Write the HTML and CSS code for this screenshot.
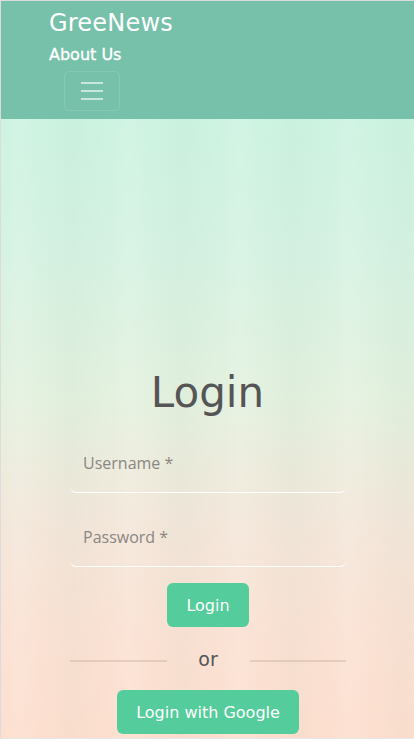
FILE: index.html
```html
<!DOCTYPE html>
<html lang="en">
<head>
<meta charset="utf-8">
<title>GreeNews - Login</title>
<link rel="stylesheet" href="styles.css">
</head>
<body>
<nav class="navbar">
  <a class="brand" href="#">GreeNews</a>
  <a class="nav-link" href="#">About Us</a>
  <button class="toggler" type="button" aria-label="Toggle navigation">
    <svg width="30" height="30" viewBox="0 0 30 30"><path d="M4 7h22M4 15h22M4 23h22" stroke="rgba(255,255,255,0.6)" stroke-width="2" stroke-linecap="butt"/></svg>
  </button>
</nav>
<main class="page">
  <div class="streaks"></div>
  <section class="login">
    <h1 class="title">Login</h1>
    <form class="form">
      <input class="field" type="text" placeholder="Username *">
      <input class="field" type="password" placeholder="Password *">
      <button class="btn" type="button">Login</button>
      <div class="divider"><span class="line"></span><span class="or">or</span><span class="line"></span></div>
      <button class="btn" type="button">Login with Google</button>
    </form>
  </section>
</main>
</body>
</html>
```
FILE: styles.css
```css
html, body { margin: 0; padding: 0; }
body {
  font-family: "DejaVu Sans", "Open Sans", sans-serif;
  border-top: 1px solid #dcdcdc;
  border-left: 1px solid #dcdcdc;
  border-bottom: 1px solid #e8e8e8;
  height: 737px;
  overflow: hidden;
  box-sizing: content-box;
}
.navbar {
  background: #77c1ab;
  height: 118px;
  padding: 6px 0 0 48px;
  box-sizing: border-box;
  display: flex;
  flex-direction: column;
  align-items: flex-start;
}
.brand {
  color: #fff;
  text-decoration: none;
  font-size: 24px;
  line-height: 32px;
  letter-spacing: 0.2px;
}
.nav-link {
  color: #fff;
  text-decoration: none;
  font-size: 16px;
  line-height: 20px;
  margin-top: 6px;
  -webkit-text-stroke: 0.3px #fff;
}
.toggler {
  margin: 6px 0 0 15px;
  width: 56px;
  height: 40px;
  background: transparent;
  border: 1px solid rgba(255,255,255,0.12);
  border-radius: 5px;
  padding: 0;
  display: flex;
  align-items: center;
  justify-content: center;
}
.toggler svg { display: block; }
.page {
  position: relative;
  height: 620px;
  background: linear-gradient(180deg, #cdf3e1 0%, #d6f2e2 22%, #e4f1df 45%, #f3e7da 65%, #fae2d4 82%, #fddfcf 100%);
  overflow: hidden;
}
.streaks {
  position: absolute;
  inset: 0;
  background: repeating-linear-gradient(90deg, rgba(255,255,255,0) 0px, rgba(255,255,255,0.1) 18px, rgba(0,0,0,0.0) 40px, rgba(120,160,140,0.04) 70px, rgba(255,255,255,0) 110px);
  pointer-events: none;
}
.login {
  position: relative;
  padding-top: 249px;
  display: flex;
  flex-direction: column;
  align-items: center;
}
.title {
  margin: 0;
  font-family: "DejaVu Sans", sans-serif;
  font-weight: normal;
  font-size: 42px;
  line-height: 50px;
  color: #555;
}
.form {
  width: 276px;
  display: flex;
  flex-direction: column;
  align-items: center;
  margin-top: 15px;
  margin-left: 1px;
}
.field {
  width: 100%;
  box-sizing: border-box;
  height: 60px;
  background: transparent;
  border: none;
  border-bottom: 1px solid #fff;
  border-radius: 6px;
  padding: 0 13px;
  font-family: "Open Sans", sans-serif;
  font-size: 16px;
  color: #555;
  outline: none;
}
.field::placeholder { color: #8a8683; }
.field + .field { margin-top: 14px; }
.btn {
  margin-top: 16px;
  background: #55cc9b;
  color: #fff;
  border: none;
  border-radius: 6px;
  height: 44px;
  padding: 0 19px;
  font-family: "DejaVu Sans", sans-serif;
  font-size: 16px;
}
.divider {
  width: 100%;
  display: flex;
  align-items: center;
  margin-top: 19px;
  height: 30px;
}
.line { flex: 1; height: 2px; background: rgba(150,120,100,0.2); }
.or {
  width: 83px;
  text-align: center;
  font-size: 19px;
  color: #555;
  margin-top: -4px;
}
.divider + .btn { margin-top: 14px; }
```
